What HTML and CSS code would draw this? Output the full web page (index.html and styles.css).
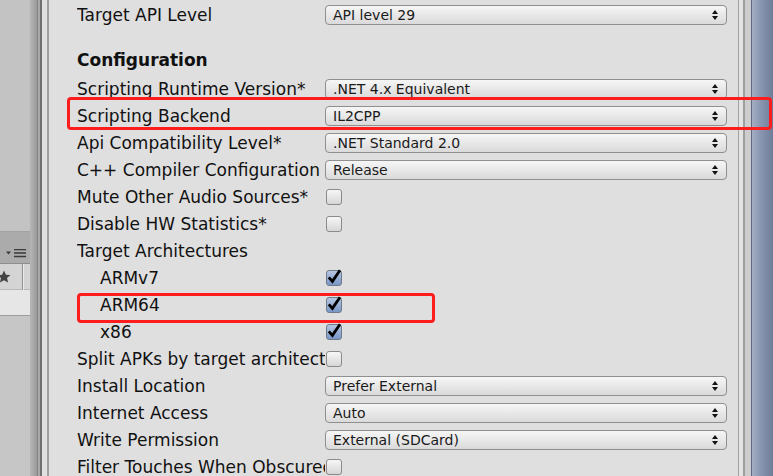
FILE: index.html
```html
<!DOCTYPE html>
<html lang="en">
<head>
  <meta charset="UTF-8" />
  <title>Player Settings</title>
  <link rel="stylesheet" href="styles.css">
</head>
<body>
  <div class="window">
    <aside class="side">
      <div class="side-top"></div>
      <div class="side-toolbar">
        <svg class="menu-icon" width="21" height="9" viewBox="0 0 21 9">
          <path d="M0 2.5h5l-2.5 3z" fill="#3a3a3a"/>
          <path d="M8 0.5h12M8 4h12M8 7.5h12" stroke="#3a3a3a" stroke-width="1.6"/>
        </svg>
      </div>
      <div class="side-tabs">
        <svg class="star" width="14" height="14" viewBox="3 0 14 14">
          <path d="M7 0.5l1.9 4.2 4.6.4-3.5 3 1.1 4.5L7 10.2 2.9 12.6 4 8.1 0.5 5.1l4.6-.4z" fill="#454545"/>
        </svg>
        <span class="tab-sep"></span>
      </div>
      <div class="side-search"></div>
      <div class="side-rest"></div>
    </aside>

    <div class="splitter">
      <span class="split-a"></span>
      <span class="split-b"></span>
      <span class="split-c"></span>
      <span class="split-d"></span>
    </div>

    <main class="inspector">
      <div class="row">
        <span class="label">Target API Level</span>
        <div class="select">API level 29<svg class="arrows" viewBox="0 0 6 10"><path d="M3 0L6 4H0zM0 6h6L3 10z"/></svg></div>
      </div>

      <div class="row heading">Configuration</div>

      <div class="row">
        <span class="label">Scripting Runtime Version*</span>
        <div class="select">.NET 4.x Equivalent<svg class="arrows" viewBox="0 0 6 10"><path d="M3 0L6 4H0zM0 6h6L3 10z"/></svg></div>
      </div>
      <div class="row">
        <span class="label">Scripting Backend</span>
        <div class="select">IL2CPP<svg class="arrows" viewBox="0 0 6 10"><path d="M3 0L6 4H0zM0 6h6L3 10z"/></svg></div>
      </div>
      <div class="row">
        <span class="label">Api Compatibility Level*</span>
        <div class="select">.NET Standard 2.0<svg class="arrows" viewBox="0 0 6 10"><path d="M3 0L6 4H0zM0 6h6L3 10z"/></svg></div>
      </div>
      <div class="row">
        <span class="label">C++ Compiler Configuration</span>
        <div class="select">Release<svg class="arrows" viewBox="0 0 6 10"><path d="M3 0L6 4H0zM0 6h6L3 10z"/></svg></div>
      </div>
      <div class="row">
        <span class="label">Mute Other Audio Sources*</span>
        <span class="check"></span>
      </div>
      <div class="row">
        <span class="label">Disable HW Statistics*</span>
        <span class="check"></span>
      </div>
      <div class="row">
        <span class="label">Target Architectures</span>
      </div>
      <div class="row sub">
        <span class="label">ARMv7</span>
        <span class="check on"><svg viewBox="0 0 16 16"><path d="M2.8 8.4l3.6 4L14 1.2"/></svg></span>
      </div>
      <div class="row sub">
        <span class="label">ARM64</span>
        <span class="check on"><svg viewBox="0 0 16 16"><path d="M2.8 8.4l3.6 4L14 1.2"/></svg></span>
      </div>
      <div class="row sub">
        <span class="label">x86</span>
        <span class="check on"><svg viewBox="0 0 16 16"><path d="M2.8 8.4l3.6 4L14 1.2"/></svg></span>
      </div>
      <div class="row">
        <span class="label">Split APKs by target architecture</span>
        <span class="check"></span>
      </div>
      <div class="row">
        <span class="label">Install Location</span>
        <div class="select">Prefer External<svg class="arrows" viewBox="0 0 6 10"><path d="M3 0L6 4H0zM0 6h6L3 10z"/></svg></div>
      </div>
      <div class="row">
        <span class="label">Internet Access</span>
        <div class="select">Auto<svg class="arrows" viewBox="0 0 6 10"><path d="M3 0L6 4H0zM0 6h6L3 10z"/></svg></div>
      </div>
      <div class="row">
        <span class="label">Write Permission</span>
        <div class="select">External (SDCard)<svg class="arrows" viewBox="0 0 6 10"><path d="M3 0L6 4H0zM0 6h6L3 10z"/></svg></div>
      </div>
      <div class="row">
        <span class="label">Filter Touches When Obscured</span>
        <span class="check"></span>
      </div>
    </main>

    <div class="edge">
      <span class="edge-a"></span>
      <span class="edge-b"></span>
      <span class="edge-c"></span>
    </div>
    <div class="scrollbar"></div>

    <!-- red highlight frames -->
    <div class="mark mark-backend"></div>
    <div class="mark mark-arm64"></div>
  </div>
</body>
</html>
```

FILE: styles.css
```css
* {
  box-sizing: border-box;
  margin: 0;
  padding: 0;
}
body {
  width: 773px;
  height: 476px;
  overflow: hidden;
  background: #dfdfdf;
  font-family: "DejaVu Sans", Verdana, sans-serif;
}
.window {
  position: relative;
  display: flex;
  height: 476px;
}

/* Left panel */
.side {
  width: 31px;
  display: flex;
  flex-direction: column;
  border-right: 1px solid #b4b4b4;
}
.side-top {
  height: 232px;
  background: #c3c3c3;
  border-bottom: 1px solid #a2a2a2;
}
.side-toolbar {
  height: 32px;
  background: #ababab;
  display: flex;
  align-items: flex-end;
  padding: 0 0 5px 6px;
  border-bottom: 1px solid #8e8e8e;
}
.side-tabs {
  height: 26px;
  background: #d4d4d4;
  display: flex;
  align-items: center;
  border-bottom: 1px solid #b9b9b9;
}
.star {
  display: block;
}
.tab-sep {
  width: 1px;
  height: 26px;
  margin-left: 8px;
  background: #8f8f8f;
  box-shadow: 1px 0 0 #ececec;
}
.side-search {
  height: 26px;
  background: #e6e6e6;
  border-bottom: 1px solid #9c9c9c;
}
.side-rest {
  flex: 1;
  background: #c6c6c6;
}

/* Splitter strips */
.splitter {
  width: 18px;
  display: flex;
}
.split-a {
  width: 6px;
  background: linear-gradient(90deg, #b3b3b3, #999);
}
.split-b {
  width: 3px;
  background: #a9a9a9;
  border-left: 1px solid #878787;
}
.split-c {
  width: 7px;
  background: #e0e0e0;
  border-left: 2px solid #707070;
}
.split-d {
  width: 2px;
  background: #a0a0a0;
}

/* Inspector */
.inspector {
  width: 689px;
  padding: 1px 11px 0 28px;
  background: #dfdfdf;
  color: #111;
  font-size: 17px;
}
.row {
  display: flex;
  align-items: center;
  height: 27px;
}
.heading {
  margin: 18px 0 2px;
  font-weight: bold;
}
.label {
  width: 248px;
  flex: none;
  white-space: nowrap;
  overflow: hidden;
}
.sub .label {
  padding-left: 23px;
}
.select {
  width: 402px;
  height: 20px;
  padding-left: 7px;
  border: 1px solid #8f8f8f;
  border-radius: 4px;
  background: linear-gradient(#f6f6f6, #dadada);
  font-size: 14px;
  line-height: 18px;
  color: #1a1a1a;
  white-space: nowrap;
  position: relative;
}
.arrows {
  position: absolute;
  right: 8px;
  top: 4px;
  width: 6px;
  height: 10px;
  fill: #111;
}
.check {
  width: 16px;
  height: 16px;
  margin-left: 1px;
  border: 1px solid #8a8a8a;
  border-radius: 3px;
  background: linear-gradient(#f7f7f7, #d6d6d6);
}
.check.on {
  border-color: #6f7a8a;
  background: linear-gradient(#b6c7e2, #7896c6);
}
.check svg {
  display: block;
  width: 16px;
  height: 16px;
  margin: -2px 0 0 -1px;
  overflow: visible;
}
.check path {
  fill: none;
  stroke: #000;
  stroke-width: 2.8;
  stroke-linejoin: miter;
}

/* Right edge and scrollbar */
.edge {
  width: 13px;
  display: flex;
}
.edge-a {
  width: 5px;
  background: #e3e3e3;
  border-left: 1px solid #a3a3a3;
}
.edge-b {
  width: 2px;
  background: #9e9e9e;
}
.edge-c {
  width: 6px;
  background: #cdcdcd;
}
.scrollbar {
  width: 22px;
  background: linear-gradient(90deg, #a4aec3, #8a97b1 40%, #6f7c98);
  border-left: 1px solid #5d6882;
}

/* Highlight frames */
.mark {
  position: absolute;
  border: 3.5px solid #ff1c1c;
  border-radius: 4px;
}
.mark-backend {
  left: 67px;
  top: 97px;
  width: 705px;
  height: 33px;
}
.mark-arm64 {
  left: 77px;
  top: 293px;
  width: 358px;
  height: 30px;
}
```
